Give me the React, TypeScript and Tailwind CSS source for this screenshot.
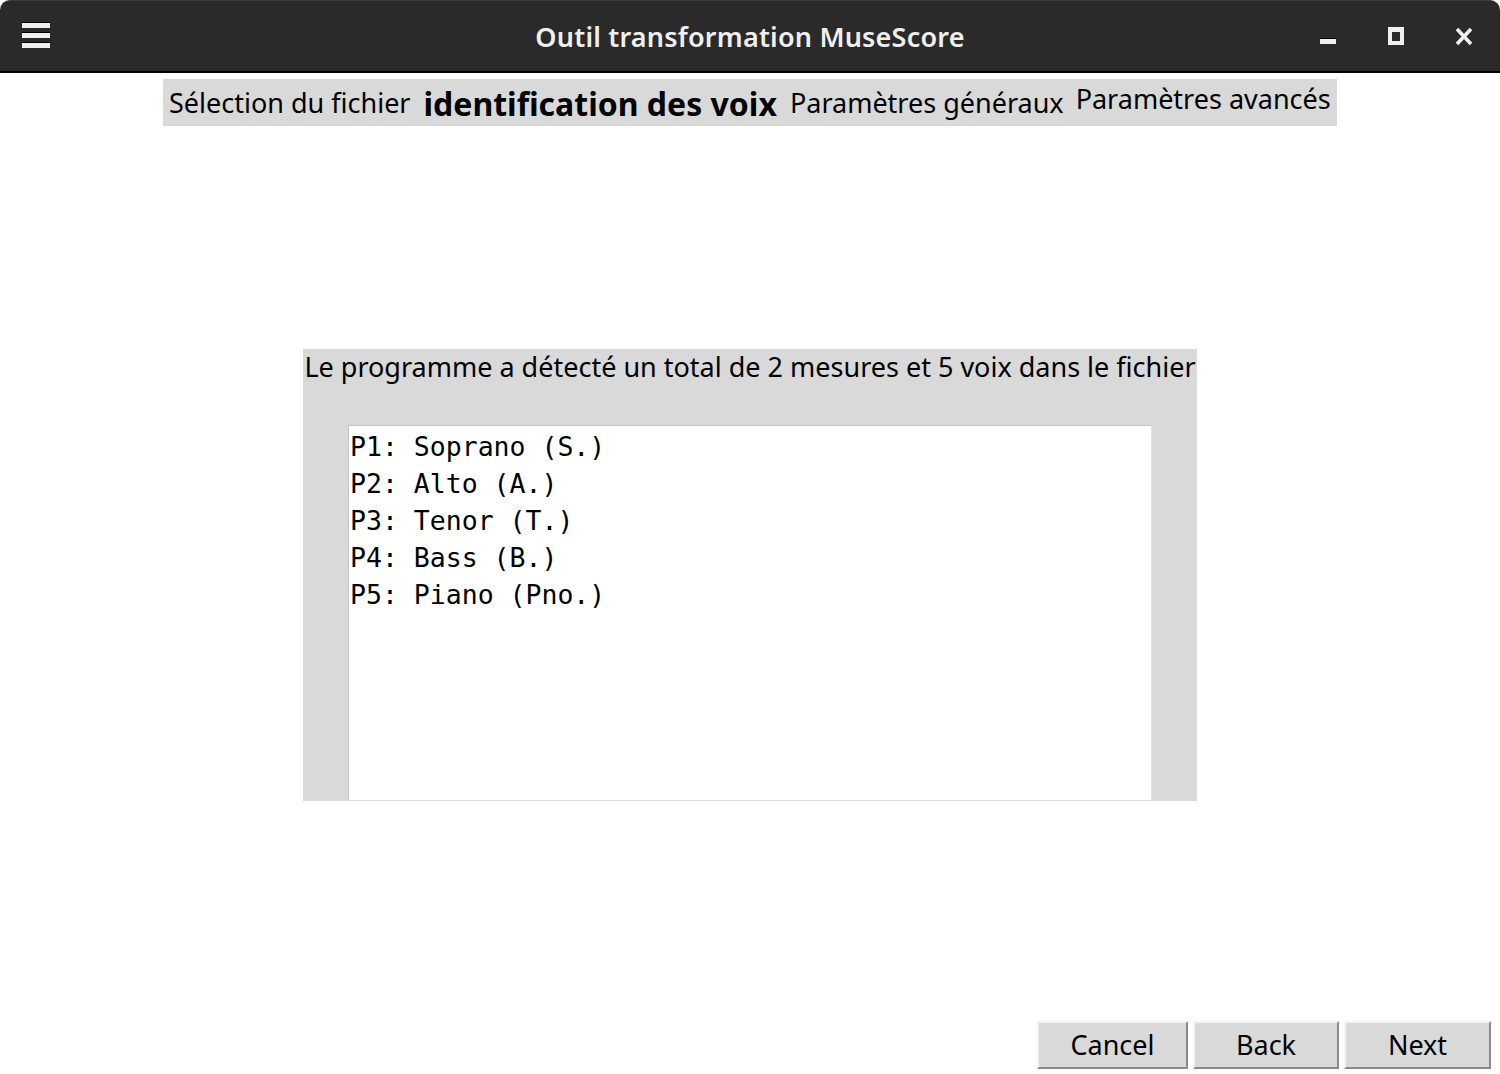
import React from 'react';

const voices = ['P1: Soprano (S.)', 'P2: Alto (A.)', 'P3: Tenor (T.)', 'P4: Bass (B.)', 'P5: Piano (Pno.)'];

const TitleBar = () => (
  <div className="h-[73px] shrink-0 bg-[#2a2a2a] rounded-t-[10px] border-t border-[#3c3c3c] border-b-2 border-b-black flex items-center relative">
    {/* hamburger */}
    <div className="absolute left-[22px] top-[21px] flex flex-col gap-[4px]">
      <div className="w-[28px] h-[6px] bg-[#f0f0f0] border-t border-black" />
      <div className="w-[28px] h-[6px] bg-[#f0f0f0] border-t border-black" />
      <div className="w-[28px] h-[6px] bg-[#f0f0f0] border-t border-black" />
    </div>
    <div className="flex-1 text-center text-[#efefef] text-[27px] font-semibold mt-[2px] tracking-[0.2px] font-['Noto_Sans',sans-serif]">
      Outil transformation MuseScore
    </div>
    {/* window buttons */}
    <div className="absolute left-[1320px] top-[37px] w-[16px] h-[6px] bg-[#f0f0f0] border-t border-black" />
    <div className="absolute left-[1388px] top-[26px] w-[16px] h-[18px] border-[4px] border-[#f0f0f0] border-t-[5px]" />
    <svg className="absolute left-[1455px] top-[26px]" width="18" height="19" viewBox="0 0 18 19">
      <path d="M2 2 L16 17 M16 2 L2 17" stroke="#f0f0f0" strokeWidth="3.6" />
    </svg>
  </div>
);

const Tabs = () => (
  <div className="flex justify-center mt-[6px]">
    <div className="h-[47px] w-[1174px] bg-[#d9d9d9] flex items-center pl-[6px] text-black font-['Noto_Sans',sans-serif]">
      <span className="text-[27px] mt-[2px]">Sélection du fichier</span>
      <span className="text-[32px] font-bold ml-[13px] mt-[2px]">identification des voix</span>
      <span className="text-[27px] ml-[13px] mt-[2px]">Paramètres généraux</span>
      <span className="text-[27px] ml-[12px] -mt-[6px]">Paramètres avancés</span>
    </div>
  </div>
);

const VoicePanel = () => (
  <div className="w-[894px] h-[452px] bg-[#d9d9d9] flex flex-col items-center">
    <div className="text-[27px] leading-[38px] text-black -mt-[1px] whitespace-nowrap font-['Noto_Sans',sans-serif]">
      Le programme a détecté un total de 2 mesures et 5 voix dans le fichier
    </div>
    <div className="mt-[39px] w-[804px] flex-1 bg-white border border-[#c4c4c4] border-r-[#e0e0e0] border-b-[#e0e0e0] pl-[1px] pt-[2px]">
      {voices.map((v) => (
        <div key={v} className="text-[26.5px] leading-[37px] text-black whitespace-pre font-['DejaVu_Sans_Mono',monospace]">
          {v}
        </div>
      ))}
    </div>
  </div>
);

const WizardButton = ({ label, width }: { label: string; width: string }) => (
  <button
    className={`${width} h-[48px] bg-[#d9d9d9] text-[27px] text-black border-2 border-t-[#f4f4f4] border-l-[#f4f4f4] border-b-[#8a8a8a] border-r-[#8a8a8a] font-['Noto_Sans',sans-serif]`}
  >
    {label}
  </button>
);

export default function App() {
  return (
    <div className="h-[1074px] w-[1500px] bg-white flex flex-col font-['Noto_Sans',sans-serif]">
      <TitleBar />
      <Tabs />
      <div className="flex-1 flex items-center justify-center pt-[2px]">
        <VoicePanel />
      </div>
      <div className="flex justify-end gap-[5px] pr-[9px] pb-[5px]">
        <WizardButton label="Cancel" width="w-[151px]" />
        <WizardButton label="Back" width="w-[146px]" />
        <WizardButton label="Next" width="w-[147px]" />
      </div>
    </div>
  );
}
